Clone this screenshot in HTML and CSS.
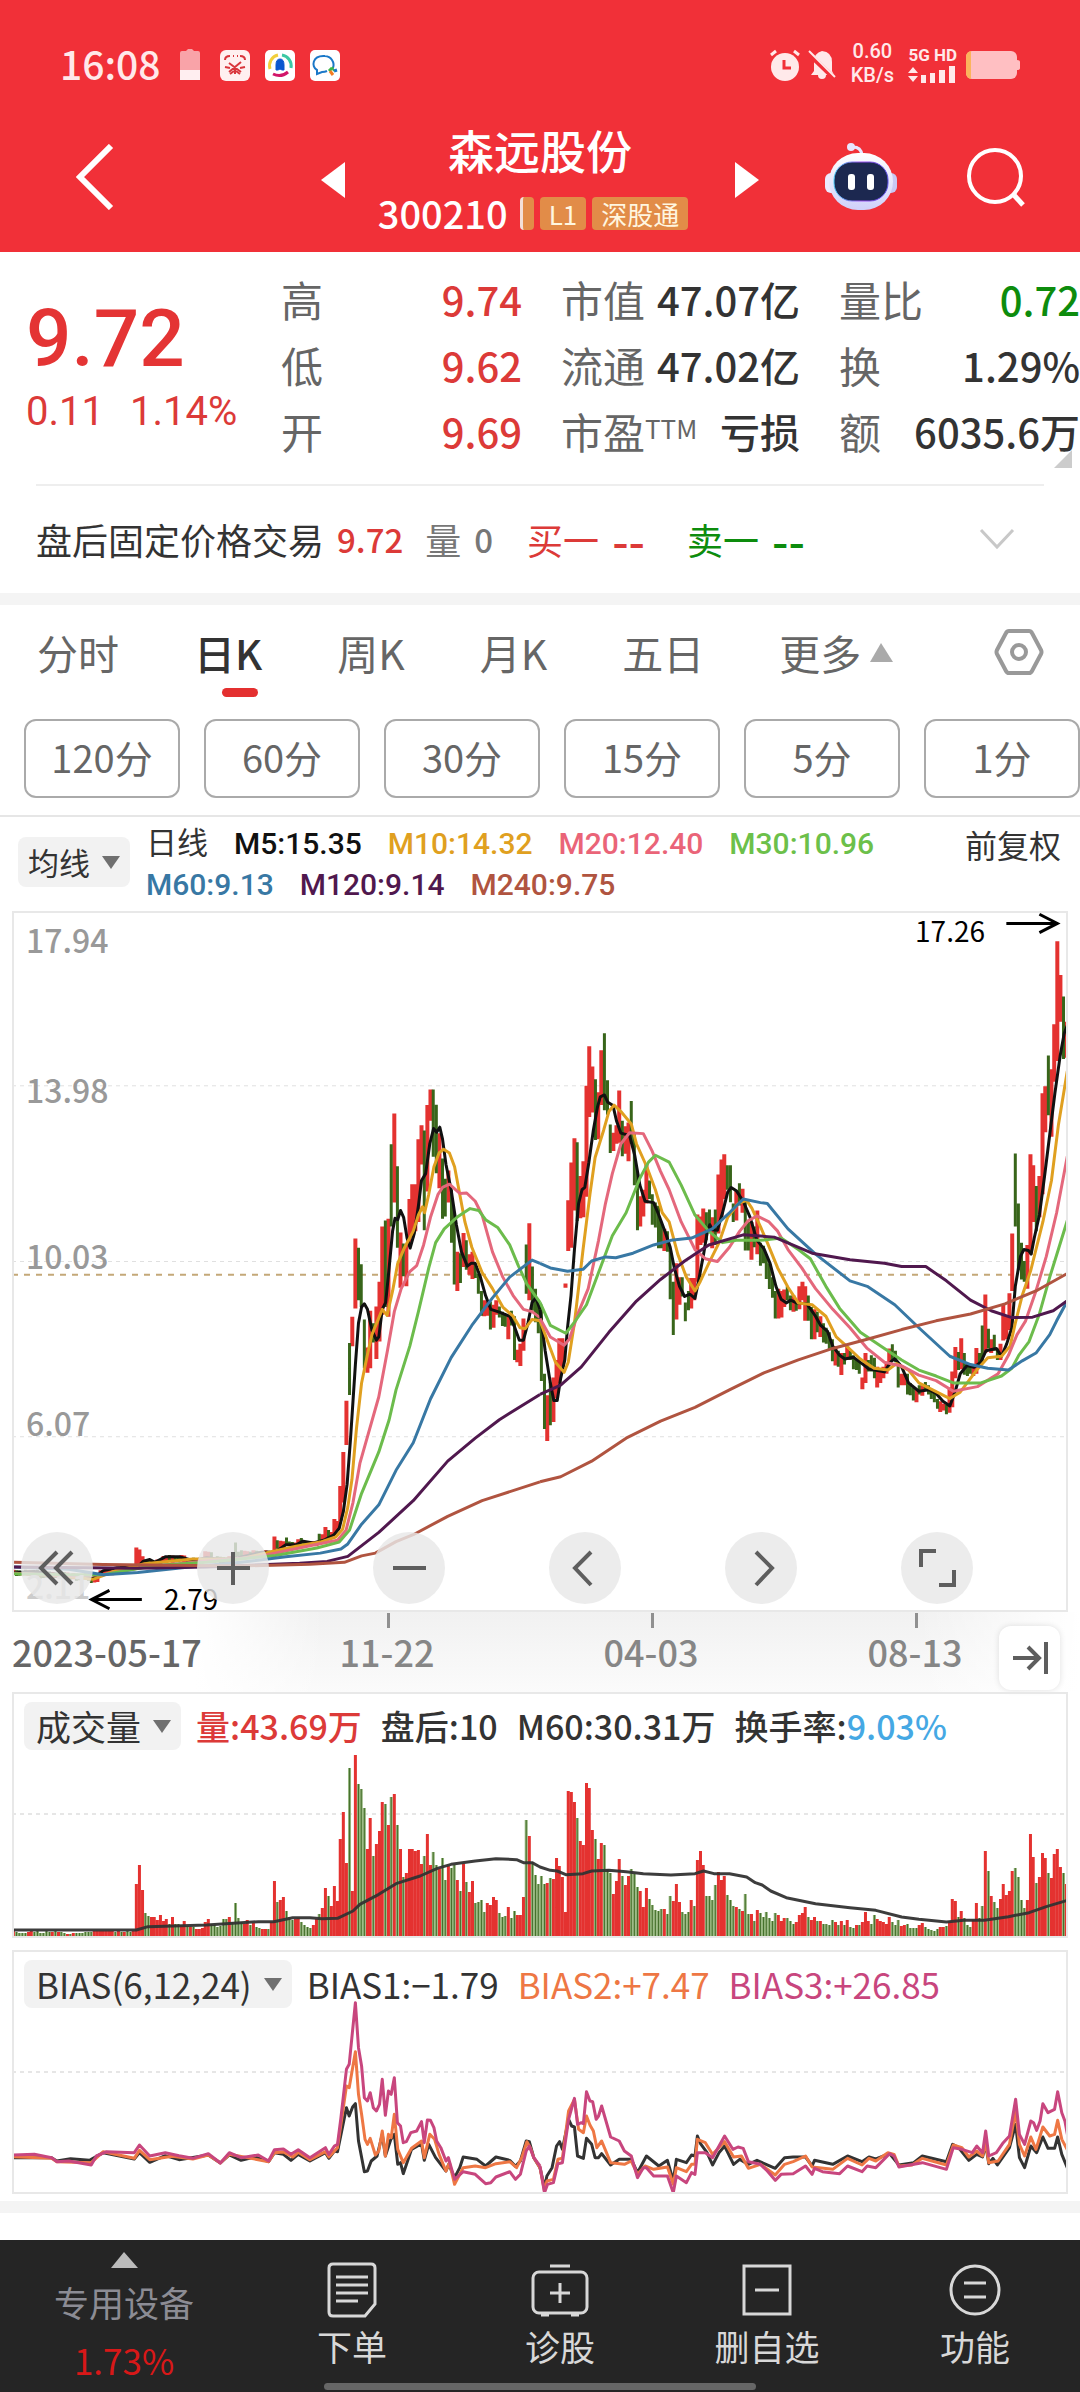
FILE: index.html
```html
<!DOCTYPE html>
<html lang="zh-CN">
<head>
<meta charset="utf-8">
<meta name="viewport" content="width=device-width">
<title>森远股份 300210</title>
<link rel="stylesheet" href="styles.css">
</head>
<body>
<header class="top">
  <div class="status">
    <span class="clock">16:08</span>
    <svg width="20" height="32" viewBox="0 0 20 32"><path d="M0 4q0-2 2-2h4l2-2h4l2 2h4q2 0 2 2v26H0z" fill="#f9a3a8"/><path d="M0 21h20v10H0z" fill="#ffeef0"/></svg>
    <svg class="app-a" width="30" height="31" viewBox="0 0 30 31"><rect width="30" height="31" rx="6" fill="#fff0f0"/><path d="M5 10q0-4 5-4M25 10q0-4-5-4M13 6h1M17 6h1M5 17l5 1M25 17l-5 1M9 13l12 9M21 12L9 22M15 18v6M10 24l4-3M20 24l-4-3" stroke="#d9363c" stroke-width="2" fill="none"/></svg>
    <svg width="30" height="31" viewBox="0 0 30 31"><rect width="30" height="31" rx="5" fill="#fff"/><path d="M5 19A11 11 0 0 1 13 5" stroke="#f2cf3c" stroke-width="3" fill="none"/><path d="M17 5a11 11 0 0 1 9 13" stroke="#3cc8a4" stroke-width="3" fill="none"/><path d="M8 24q8 4 15-2" stroke="#d2156a" stroke-width="3" fill="none"/><path d="M11 20v-5q0-6 4-6t4 6v5h-2l-2-1-2 1z" fill="#0b57d0" stroke="#0b57d0"/></svg>
    <svg width="30" height="31" viewBox="0 0 30 31"><rect width="30" height="31" rx="5" fill="#fff"/><path d="M23 18a9 9 0 0 0-8-12C2 5 1 17 7 20v4l5-2q3 0 5-1" stroke="#1a78c8" stroke-width="2" fill="none"/><path d="M19 21l3-3" stroke="#3bb54a" stroke-width="3"/><path d="M22 17l2 4" stroke="#3bb54a" stroke-width="2"/><path d="M20 21l3 4" stroke="#f57c20" stroke-width="3"/><path d="M24 21l3-1" stroke="#1a78c8" stroke-width="3"/></svg>
    <span class="grow"></span>
    <svg class="alarm" width="30" height="32" viewBox="0 0 30 32"><circle cx="15" cy="18" r="14" fill="#ffe9ea"/><path d="M14 11v8h7" stroke="#f13038" stroke-width="3" fill="none"/><path d="M1 6l5-4M29 6l-5-4" stroke="#ffe9ea" stroke-width="3"/></svg>
    <svg width="28" height="32" viewBox="0 0 28 32"><path d="M3 26l3-4v-9Q6 4 14 2q10 1 10 11v9l2 4H18q0 4-4 4t-4-4z" fill="#ffe9ea"/><path d="M0 4l27 26" stroke="#f13038" stroke-width="5"/><path d="M1 2l26 26" stroke="#ffe9ea" stroke-width="2"/></svg>
    <span class="speed"><b>0.60</b><b>KB/s</b></span>
    <span class="net"><b>5G HD</b><svg width="48" height="17" viewBox="0 0 48 17" fill="#ffe9ea"><path d="M0 7l5-6 5 6zM0 10h10l-5 6zM13 9h5v8h-5zM22 7h5v10h-5zM31 4h6v13h-6zM41 0h6v17h-6z"/></svg></span>
    <svg width="54" height="28" viewBox="0 0 54 28"><rect width="51" height="28" rx="6" fill="#ffbfc2"/><path d="M5 0Q0 1 0 6v16q0 5 5 6z" fill="#fbb45c"/><path d="M51 9q3 0 3 2v6q0 2-3 2z" fill="#ffbfc2"/></svg>
  </div>
  <div class="titlebar">
    <button class="plain back" aria-label="返回"><svg width="38" height="66" viewBox="0 0 38 66"><path d="M35 2L4 33l31 31" fill="none" stroke="#fff" stroke-width="6"/></svg></button>
    <div class="stock">
      <button class="plain" aria-label="上一只"><svg width="24" height="38" viewBox="0 0 24 38"><path d="M24 1v36L0 19z" fill="#fff"/></svg></button>
      <div class="name">
        <h1>森远股份</h1>
        <p class="code">300210 <i class="tag cut"></i><i class="tag">L1</i><i class="tag wide">深股通</i></p>
      </div>
      <button class="plain" aria-label="下一只"><svg width="24" height="38" viewBox="0 0 24 38"><path d="M0 1v36l24-18z" fill="#fff"/></svg></button>
    </div>
    <div class="tools">
      <button class="plain" aria-label="智能助手"><svg width="72" height="68" viewBox="0 0 72 68"><defs><linearGradient id="shell" x2="0" y2="1"><stop stop-color="#fff"/><stop offset="1" stop-color="#cfd0fa"/></linearGradient><linearGradient id="rim"><stop stop-color="#4fd0ff"/><stop offset=".5" stop-color="#a050f0"/><stop offset="1" stop-color="#5a50e8"/></linearGradient></defs><path d="M28 4q8 0 9 8" fill="none" stroke="#e8e6ff" stroke-width="3"/><circle cx="26" cy="4" r="4" fill="#e8e6ff"/><rect y="30" width="14" height="20" rx="6" fill="#eceaff"/><rect x="58" y="30" width="14" height="20" rx="6" fill="#c9c8f4"/><rect x="4" y="10" width="64" height="57" rx="29" fill="url(#shell)"/><rect x="9" y="19" width="54" height="39" rx="18" fill="#1c2850" stroke="url(#rim)" stroke-width="1"/><rect x="23" y="31" width="7" height="16" rx="3" fill="#fff"/><rect x="42" y="31" width="7" height="16" rx="3" fill="#fff"/></svg></button>
      <button class="plain" aria-label="搜索"><svg width="60" height="62" viewBox="0 0 60 62"><circle cx="29" cy="30" r="26" fill="none" stroke="#fff" stroke-width="4"/><path d="M47 48l10 11" stroke="#fff" stroke-width="5"/></svg></button>
    </div>
  </div>
</header>

<main>
<section class="quote">
  <div class="last">
    <strong>9.72</strong>
    <span><em>0.11</em><em>1.14%</em></span>
  </div>
  <dl class="up">
    <div><dt>高</dt><dd>9.74</dd></div>
    <div><dt>低</dt><dd>9.62</dd></div>
    <div><dt>开</dt><dd>9.69</dd></div>
  </dl>
  <dl>
    <div><dt>市值</dt><dd>47.07亿</dd></div>
    <div><dt>流通</dt><dd>47.02亿</dd></div>
    <div><dt>市盈<sup>TTM</sup></dt><dd>亏损</dd></div>
  </dl>
  <dl>
    <div><dt>量比</dt><dd class="green">0.72</dd></div>
    <div><dt>换</dt><dd>1.29%</dd></div>
    <div><dt>额</dt><dd>6035.6万</dd></div>
  </dl>
  <svg class="corner" width="18" height="18" viewBox="0 0 18 18"><path d="M18 0v18H0z" fill="#ccc"/></svg>
</section>

<section class="after">
  <span>盘后固定价格交易</span><b class="red">9.72</b><span class="muted vol">量</span><b class="muted">0</b>
  <span class="red bid">买一</span><b class="red none">--</b><span class="green ask">卖一</span><b class="green none">--</b>
  <button class="plain expand" aria-label="展开"><svg width="36" height="22" viewBox="0 0 36 22"><path d="M2 2l16 17L34 2" fill="none" stroke="#c8c8c8" stroke-width="3"/></svg></button>
</section>

<nav class="tabs">
  <button class="plain">分时</button>
  <button class="plain on">日K</button>
  <button class="plain">周K</button>
  <button class="plain">月K</button>
  <button class="plain">五日</button>
  <button class="plain more">更多<svg width="23" height="19" viewBox="0 0 23 19"><path d="M11 0l12 19H0z" fill="#aaa"/></svg></button>
  <button class="plain gear" aria-label="设置"><svg width="50" height="46" viewBox="0 0 50 46" fill="none" stroke="#999" stroke-width="4"><path d="M15 2h20q2 0 3 2l9 17q1 2 0 4l-9 17q-1 2-3 2H15q-2 0-3-2L3 25q-1-2 0-4l9-17q1-2 3-2z"/><circle cx="25" cy="23" r="7"/></svg></button>
</nav>
<div class="periods">
  <button>120分</button><button>60分</button><button>30分</button><button>15分</button><button>5分</button><button>1分</button>
</div>

<section class="legend">
  <button class="pick">均线<i class="down"></i></button>
  <ul>
    <li>日线</li><li class="c5">M5:15.35</li><li class="c10">M10:14.32</li><li class="c20">M20:12.40</li><li class="c30">M30:10.96</li>
    <li class="c60">M60:9.13</li><li class="c120">M120:9.14</li><li class="c240">M240:9.75</li>
  </ul>
  <span class="adjust">前复权</span>
</section>

<section class="frame kline">
  <svg viewBox="35 24 3066 1524" preserveAspectRatio="none">
    <g class="grid"><path d="M35 404H3101M35 786H3101M35 1167H3101"/></g>
    <path class="now" d="M35 815H3101"/>
    <path id="k-up" class="up-bar"/><path id="k-down" class="down-bar"/>
    <g class="ma">
      <polyline class="s5" points="41,1462 100,1460 180,1468 230,1470 270,1475 300,1458 340,1452 400,1450 415,1438 435,1434 450,1440 480,1428 520,1428 560,1436 600,1430 640,1434 680,1432 720,1425 760,1418 790,1418 810,1412 830,1402 860,1402 880,1394 910,1398 940,1392 970,1380 985,1366 997,1330 1008,1270 1018,1170 1032,1010 1041,920 1050,885 1058,878 1067,890 1080,935 1093,957 1100,950 1110,890 1120,875 1130,800 1140,720 1147,692 1155,695 1163,675 1172,690 1182,735 1191,757 1203,725 1215,665 1224,610 1236,595 1248,530 1259,497 1268,505 1277,494 1285,520 1295,575 1310,630 1325,705 1340,765 1357,796 1368,790 1380,790 1395,820 1410,860 1425,890 1450,896 1480,905 1495,930 1508,957 1520,957 1533,920 1545,875 1556,865 1568,890"/>
      <polyline class="s10" points="41,1464 180,1470 270,1477 330,1460 420,1443 560,1433 700,1432 800,1415 860,1405 930,1396 975,1385 995,1368 1010,1320 1022,1260 1035,1150 1050,1050 1068,985 1080,945 1110,890 1124,903 1140,850 1155,790 1172,760 1200,720 1215,685 1227,667 1233,680 1245,640 1260,580 1275,550 1288,542 1305,550 1320,580 1335,640 1350,700 1370,755 1400,810 1430,845 1460,885 1490,905 1510,930 1525,932 1545,912 1568,915"/>
      <polyline class="s20" points="41,1464 200,1469 300,1467 420,1450 600,1437 750,1428 900,1404 980,1392 1005,1370 1025,1310 1045,1225 1100,1080 1125,980 1145,895 1165,845 1190,808 1210,795 1230,750 1250,690 1272,640 1285,625 1305,618 1335,638 1355,637 1380,655 1400,685 1430,765 1460,820 1490,860 1520,890 1545,895 1568,908"/>
      <polyline class="s30" points="41,1465 200,1467 300,1467 450,1447 600,1440 800,1425 920,1409 985,1396 1015,1370 1050,1290 1100,1200 1130,1130 1150,1065 1190,970 1215,895 1245,800 1265,745 1290,715 1330,688 1365,671 1390,675 1410,695 1445,712 1480,750 1505,795 1530,835 1568,875"/>
      <polyline class="s60" points="41,1450 200,1455 300,1467 400,1462 550,1450 700,1440 830,1428 930,1420 990,1411 1010,1400 1050,1357 1100,1315 1150,1240 1200,1180 1250,1085 1310,995 1370,925 1430,865 1480,820 1545,783 1568,790"/>
      <polyline class="s120" points="41,1450 400,1453 600,1450 870,1442 950,1438 1010,1427 1100,1375 1200,1306 1300,1220 1380,1170 1450,1130 1568,1075"/>
      <polyline class="s240" points="41,1440 300,1445 700,1448 900,1444 1000,1440 1050,1426 1090,1420 1150,1395 1200,1380 1300,1340 1400,1306 1568,1265"/>
    </g>
    <g class="ma" transform="translate(1568 0)">
      <polyline class="s5" points="0,890 15,980 30,1050 40,1088 50,1088 60,1040 72,1000 80,930 90,860 100,760 112,660 122,630 130,625 142,570 155,500 167,450 175,428 187,424 197,440 212,447 222,480 235,507 260,512 275,555 290,620 305,655 330,658 345,685 365,725 378,755 390,800 405,840 420,862 435,857 450,866 460,830 475,770 485,725 493,706 500,717 515,718 530,680 545,635 555,625 570,632 590,655 610,690 630,740 650,758 668,790 685,840 700,868 715,876 728,870 745,876 775,878 800,905 815,925 835,938 850,970 870,990 885,998 910,994 935,1008 955,1020 1000,1026 1020,1003 1030,997 1050,1015 1070,1050 1100,1068 1130,1065 1150,1073 1170,1090 1190,1100 1205,1070 1220,1030 1240,1012 1260,1016 1280,1005 1295,980 1325,975 1340,992 1355,965 1370,930 1380,840 1395,775 1405,760 1418,762 1426,770 1435,735 1450,685 1465,600 1480,510 1495,420 1510,340 1522,290 1531,273"/>
      <polyline class="s10" points="0,915 20,955 45,1005 70,1027 82,1005 100,920 125,760 145,640 160,560 185,500 200,460 215,446 235,460 265,487 280,530 310,580 335,630 355,680 375,700 400,770 425,820 450,850 465,830 490,790 520,745 545,690 575,660 600,653 615,670 640,710 660,745 690,800 720,842 750,876 790,880 830,905 860,950 890,970 930,998 970,1018 1010,1022 1035,1008 1070,1022 1100,1050 1140,1065 1190,1084 1220,1070 1270,1020 1300,995 1340,992 1365,970 1380,920 1400,860 1425,805 1460,700 1485,610 1505,490 1531,372"/>
      <polyline class="s20" points="0,910 30,950 70,968 85,955 110,900 140,845 170,740 190,660 210,595 235,530 260,506 300,508 325,545 350,590 375,630 410,700 450,760 480,780 515,786 550,755 580,720 605,697 630,687 665,700 690,720 720,760 760,800 800,845 850,890 900,930 950,975 1000,1005 1050,1013 1100,1033 1150,1045 1200,1068 1270,1058 1330,1030 1360,990 1385,945 1410,915 1440,850 1470,775 1500,680 1531,557"/>
      <polyline class="s30" points="0,875 30,925 75,942 100,918 135,880 175,800 210,730 250,680 290,605 315,570 335,555 375,570 410,620 450,685 490,720 530,745 570,740 640,740 700,735 750,760 785,780 830,840 870,888 930,940 1000,975 1050,1000 1100,1022 1150,1035 1200,1050 1280,1050 1340,1035 1370,1018 1390,990 1420,960 1450,900 1480,820 1531,697"/>
      <polyline class="s60" points="0,790 30,800 80,807 125,803 150,785 190,776 220,778 270,768 330,750 380,740 440,735 500,715 550,680 590,650 640,658 660,660 720,715 800,770 900,828 950,840 1030,880 1100,930 1190,992 1250,1010 1300,1018 1360,1022 1400,1002 1440,985 1480,945 1500,915 1531,872"/>
      <polyline class="s120" points="0,1075 60,1055 120,1015 200,940 280,872 350,825 420,785 490,750 590,728 680,733 790,768 900,782 1000,790 1050,797 1120,797 1180,828 1250,870 1310,893 1370,908 1430,907 1490,893 1531,871"/>
      <polyline class="s240" points="0,1265 60,1254 150,1220 250,1170 350,1133 450,1103 550,1065 650,1028 750,1000 850,975 950,955 1050,934 1150,915 1250,900 1350,878 1440,850 1531,812"/>
    </g>
    <path class="arrow" d="M2922 51H3068M3018 31L3070 51L3018 71M412 1521H266M318 1501L266 1521L318 1541"/>
  </svg>
  <span class="y y1">17.94</span><span class="y y2">13.98</span><span class="y y3">10.03</span><span class="y y4">6.07</span><span class="y y5">2.11</span>
  <span class="ext high">17.26</span><span class="ext low">2.79</span>
  <div class="controls">
    <button aria-label="最左"><svg viewBox="0 0 72 72"><path d="M36 20L20 36l16 16M51 20L35 36l16 16"/></svg></button>
    <button aria-label="放大"><svg viewBox="0 0 72 72"><path d="M20 36h33M36 20v33"/></svg></button>
    <button aria-label="缩小"><svg viewBox="0 0 72 72"><path d="M20 36h33"/></svg></button>
    <button aria-label="向左"><svg viewBox="0 0 72 72"><path d="M42 20L26 36l16 17"/></svg></button>
    <button aria-label="向右"><svg viewBox="0 0 72 72"><path d="M31 20l16 16-16 17"/></svg></button>
    <button aria-label="全屏"><svg viewBox="0 0 72 72"><path d="M20 35V19h15M38 53h15V38"/></svg></button>
  </div>
</section>
<div class="dates">
  <time>2023-05-17</time><time>11-22</time><time>04-03</time><time>08-13</time>
  <button class="jump" aria-label="最新"><svg width="36" height="36" viewBox="0 0 36 36"><path d="M1 18h26M16 7l11 11-11 11M34 2v32"/></svg></button>
</div>

<section class="frame volume">
  <svg viewBox="35 -177 3066 738" preserveAspectRatio="none">
    <path class="mid" d="M35 189H3101"/>
    <path id="v-down" class="vol-down"/><path id="v-down-edge" class="vol-edge"/><path id="v-up" class="up-bar"/>
    <polyline class="vma" points="39,537 396,537 430,527 600,522 750,512 795,512 850,500 900,500 935,503 980,502 1025,480 1045,460 1100,430 1150,398 1220,375 1270,352 1310,340 1380,330 1440,323 1500,326 1520,335 1545,335 1568,348 1598,358 1618,360 1643,371 1693,368 1718,360 1768,358 1818,362 1868,368 1948,372 2018,368 2043,360 2073,368 2118,368 2168,378 2193,395 2213,402 2238,420 2283,440 2368,458 2468,470 2543,478 2618,498 2668,505 2748,513 2798,508 2858,508 2928,497 2988,485 3038,467 3099,448"/>
  </svg>
  <div class="head">
    <button class="pick">成交量<i class="down"></i></button>
    <span class="red">量:43.69万</span><span>盘后:10</span><span>M60:30.31万</span><span>换手率:<b class="blue">9.03%</b></span>
  </div>
</section>

<section class="frame bias">
  <svg viewBox="35 597 3066 732" preserveAspectRatio="none">
    <path class="mid" d="M35 963H3101"/>
    <g class="bl">
      <polyline class="b1" points="39,1220 150,1220 165,1230 205,1223 260,1228 300,1205 390,1224 405,1205 435,1234 480,1214 520,1226 605,1212 640,1236 666,1212 700,1228 740,1218 780,1232 797,1205 823,1210 845,1228 866,1210 900,1230 945,1205 955,1222 971,1200 980,1202 1006,1070 1014,1095 1024,1068 1032,1058 1041,1170 1058,1262 1067,1260 1078,1230 1095,1215 1110,1150 1119,1215 1135,1165 1145,1150 1155,1240 1163,1235 1171,1268 1195,1195 1224,1178 1232,1228 1245,1180 1265,1220 1295,1260 1303,1240 1320,1280 1335,1250 1345,1218 1385,1225 1410,1245 1440,1218 1480,1228 1497,1246 1511,1230 1528,1170 1537,1172 1550,1220 1568,1250"/>
      <polyline class="b1" transform="translate(1568 0)" points="0,1250 13,1310 20,1275 35,1250 48,1185 57,1172 65,1195 83,1105 92,1125 100,1128 109,1215 126,1222 135,1162 150,1180 160,1220 170,1220 179,1208 205,1242 230,1225 265,1225 283,1265 309,1215 345,1245 370,1228 387,1290 396,1225 425,1235 440,1212 450,1215 457,1155 466,1178 485,1205 501,1242 520,1205 536,1185 562,1240 580,1225 605,1240 630,1228 683,1252 710,1220 735,1218 771,1218 790,1245 797,1228 850,1240 893,1215 935,1232 955,1218 975,1224 1015,1208 1042,1242 1085,1235 1110,1215 1180,1232 1198,1180 1215,1190 1245,1228 1268,1210 1285,1218 1294,1180 1303,1238 1315,1222 1328,1242 1363,1190 1381,1120 1392,1220 1407,1250 1425,1185 1442,1205 1460,1158 1475,1192 1494,1192 1503,1158 1515,1210 1533,1255"/>
      <polyline class="b2" points="39,1217 150,1222 165,1232 265,1235 300,1202 390,1222 405,1198 435,1226 500,1216 560,1224 605,1212 640,1236 666,1210 780,1232 797,1205 823,1203 850,1218 866,1204 900,1226 945,1202 955,1218 980,1190 990,1120 1006,1005 1014,1010 1032,902 1041,1030 1050,1090 1060,1165 1067,1180 1075,1162 1090,1212 1100,1200 1110,1140 1119,1215 1128,1150 1136,1160 1145,1090 1155,1195 1171,1235 1195,1192 1224,1170 1232,1220 1248,1150 1262,1165 1275,1210 1295,1260 1305,1235 1320,1300 1345,1250 1380,1245 1410,1250 1440,1238 1480,1232 1500,1250 1515,1220 1530,1172 1540,1190 1550,1220 1568,1250"/>
      <polyline class="b2" transform="translate(1568 0)" points="0,1250 13,1320 20,1290 39,1285 52,1225 65,1222 83,1080 100,1045 112,1135 126,1145 135,1095 145,1122 155,1140 165,1190 179,1170 205,1235 245,1240 265,1230 283,1270 305,1245 330,1255 370,1248 387,1300 396,1250 425,1262 440,1240 450,1240 457,1165 480,1175 501,1210 536,1172 562,1218 585,1215 605,1252 640,1240 683,1272 710,1240 735,1232 771,1215 790,1248 850,1255 893,1222 935,1242 955,1222 975,1230 1010,1205 1028,1210 1042,1245 1080,1242 1110,1222 1180,1242 1200,1182 1225,1190 1245,1218 1268,1200 1285,1215 1294,1175 1303,1235 1330,1230 1363,1180 1381,1080 1392,1180 1407,1215 1425,1158 1440,1195 1460,1128 1480,1155 1494,1150 1503,1108 1515,1165 1533,1200"/>
      <polyline class="b3" points="39,1212 100,1210 150,1220 165,1232 200,1230 265,1242 280,1215 310,1202 390,1205 405,1182 435,1215 480,1205 520,1214 560,1222 605,1208 640,1236 666,1205 700,1220 750,1212 780,1230 797,1196 823,1194 845,1210 866,1196 900,1220 945,1190 955,1210 971,1185 980,1180 990,1100 1006,955 1014,940 1032,755 1041,890 1050,945 1058,1040 1067,1050 1075,1025 1084,1070 1093,1080 1102,1060 1110,985 1119,1093 1128,1020 1136,1030 1145,980 1154,1115 1163,1125 1171,1175 1180,1172 1193,1145 1210,1140 1224,1112 1232,1175 1241,1107 1250,1108 1260,1130 1268,1170 1280,1190 1295,1230 1302,1220 1320,1285 1345,1262 1380,1270 1410,1298 1425,1295 1440,1278 1480,1262 1497,1285 1511,1270 1528,1200 1537,1185 1550,1220 1568,1245"/>
      <polyline class="b3" transform="translate(1568 0)" points="0,1245 13,1325 22,1300 39,1295 52,1238 65,1235 83,1105 100,1042 109,1120 120,1115 126,1118 135,1022 145,1050 153,1052 163,1105 170,1095 179,1065 205,1158 230,1170 245,1200 265,1215 283,1280 300,1250 309,1250 330,1275 370,1275 387,1325 396,1275 425,1295 440,1265 450,1270 457,1205 480,1205 501,1220 536,1155 560,1195 575,1188 590,1192 605,1232 640,1240 660,1260 683,1288 700,1270 735,1268 771,1245 790,1270 797,1252 820,1262 870,1268 893,1245 935,1262 950,1245 975,1250 1015,1208 1028,1215 1042,1248 1110,1235 1180,1255 1200,1190 1225,1195 1255,1205 1268,1185 1285,1205 1294,1140 1303,1215 1325,1205 1345,1175 1363,1155 1381,1045 1392,1150 1407,1180 1425,1110 1433,1115 1442,1138 1452,1110 1460,1058 1475,1085 1494,1075 1503,1022 1515,1085 1524,1110 1533,1160"/>
    </g>
  </svg>
  <div class="head">
    <button class="pick">BIAS(6,12,24)<i class="down"></i></button>
    <span>BIAS1:−1.79</span><span class="orange">BIAS2:+7.47</span><span class="pink">BIAS3:+26.85</span>
  </div>
</section>
<div class="strip"></div>
</main>

<footer class="dock">
  <button class="plain sector"><svg width="27" height="16" viewBox="0 0 27 16"><path d="M13 0l14 16H0z" fill="#bbb"/></svg><span>专用设备</span><b>1.73%</b></button>
  <button class="plain"><svg width="50" height="56" viewBox="0 0 50 56"><path d="M6 2h38q4 0 4 4v36L38 54H6q-4 0-4-4V6q0-4 4-4z"/><path d="M9 15h32M9 23h32M9 31h32M9 39h22"/></svg>下单</button>
  <button class="plain"><svg width="58" height="56" viewBox="0 0 58 56"><rect x="2" y="10" width="54" height="41" rx="6"/><path d="M19 4h20M29 21v20M19 31h20M10 53h8M40 53h8"/></svg>诊股</button>
  <button class="plain"><svg width="50" height="56" viewBox="0 0 50 56"><path d="M2 4h46v48H2zM13 28h24"/></svg>删自选</button>
  <button class="plain"><svg width="52" height="56" viewBox="0 0 52 56"><circle cx="26" cy="28" r="24"/><path d="M15 21h22M15 35h22"/></svg>功能</button>
  <i class="home"></i>
</footer>
<script src="chart.js"></script>
</body>
</html>
```
FILE: styles.css
```css
* { box-sizing: border-box; }
body {
  margin: 0;
  background: #fff;
  color: #333;
  font-family: "Noto Sans CJK SC", "Noto Sans", sans-serif;
  font-weight: 400;
}
button { font: inherit; color: inherit; cursor: pointer; }
.plain { padding: 0; border: 0; background: none; }
svg { display: block; flex: none; }
h1, p, dl, dd, ul { margin: 0; padding: 0; }
i, em { font-style: normal; }
b { font-weight: 500; }
.red { color: #dc3a38; }
.green { color: #0d8c0d; }
.blue { color: #45a8e4; }
.orange { color: #ee7744; }
.pink { color: #c8467e; }
.muted { color: #777; }

.top { height: 252px; background: #f13038; color: #fff; }
.status { display: flex; align-items: center; height: 84px; padding: 42px 60px 0; color: #ffe9ea; }
.status > * { margin-top: 4px; }
.status .clock { margin: 0 19px 0 0; font-size: 39px; line-height: 40px; font-weight: 500; }
.status svg + svg { margin-left: 15px; }
.status .app-a { margin-left: 20px; }
.grow { flex: 1; }
.status .alarm + svg { margin-left: 8px; }
.speed { display: flex; flex-direction: column; align-items: center; width: 50px; margin: 0 11px; font-family: Roboto, sans-serif; font-size: 20px; line-height: 24px; }
.net { display: flex; flex-direction: column; gap: 2px; margin-right: 9px; font-family: Roboto, sans-serif; font-size: 17px; line-height: 17px; }
.net b { font-weight: 700; }
.titlebar { display: grid; grid-template-columns: 1fr auto 1fr; align-items: center; height: 168px; padding: 0 54px; }
.back { justify-self: start; margin: 18px 0 0 22px; }
.stock { display: flex; align-items: center; }
.stock button { margin-top: 24px; }
.tools { display: flex; align-items: center; justify-content: flex-end; gap: 69px; margin-top: 18px; }
.name { width: 390px; text-align: center; margin-top: 26px; }
.name h1 { font-size: 46px; line-height: 64px; font-weight: 500; }
.code { display: flex; align-items: center; justify-content: center; gap: 6px; margin-right: 14px; font-size: 38px; line-height: 64px; font-weight: 500; }
.tag { padding: 0 9px; border-radius: 4px; background: #e28c48; color: #fff6e0; font-size: 26px; line-height: 33px; font-weight: 400; }
.tag.cut { width: 14px; height: 33px; padding: 0; margin-left: 6px; border-left: 3px solid #f4e0d8; }

.quote { position: relative; display: grid; grid-template-columns: 216fr 241fr 239fr 241fr; gap: 39px; margin-top: 14px; padding-left: 26px; font-size: 40px; line-height: 66px; }
.quote dl > div { display: flex; justify-content: space-between; height: 66px; white-space: nowrap; }
.quote dt { color: #666; font-size: 42px; }
.quote dd { font-weight: 500; }
.quote sup { font-size: 26px; line-height: 26px; vertical-align: 10px; }
.quote .up dd { color: #dc3a38; }
.last { color: #e43434; font-family: Roboto, sans-serif; white-space: nowrap; }
.last strong { display: block; padding-top: 24px; font-size: 80px; line-height: 98px; font-weight: 500; }
.last em { margin-right: 26px; }
.last span { display: block; font-size: 40px; line-height: 48px; color: #dc3a38; }
.last em:last-child { margin: 0; }
.corner { position: absolute; right: 8px; bottom: -4px; }

.after { display: flex; align-items: center; height: 109px; margin: 20px 36px 0; padding-bottom: 2px; border-top: 2px solid #eee; font-size: 36px; line-height: 50px; white-space: nowrap; }
.after b { margin-left: 13px; font-size: 33px; }
.after .vol { margin-left: 22px; }
.after .bid { margin-left: 34px; }
.after .ask { margin-left: 42px; }
.after .none { font-size: 46px; }
.expand { margin-left: auto; margin-right: 29px; }

.tabs { display: flex; align-items: center; gap: 75px; height: 114px; padding: 0 36px 8px 37px; border-top: 12px solid #f4f4f4; color: #666; font-size: 41px; line-height: 60px; white-space: nowrap; }
.tabs .on { position: relative; color: #333; font-weight: 500; }
.tabs .on::after { content: ""; position: absolute; left: 28px; bottom: -15px; width: 36px; height: 9px; border-radius: 5px; background: #e43030; }
.more { display: flex; align-items: center; gap: 9px; }
.gear { margin-left: auto; }
.periods { display: grid; grid-template-columns: repeat(6, 1fr); gap: 24px; padding: 12px 0 17px 24px; border-bottom: 2px solid #e6e6e6; }
.periods button { height: 79px; padding: 0 0 4px; border: 2px solid #aaa; border-radius: 12px; background: #fff; color: #666; font-size: 38px; }

.pick { display: flex; align-items: center; gap: 12px; height: 50px; padding: 0 10px 0 12px; border: 0; border-radius: 8px; background: #f2f2f2; color: #333; white-space: nowrap; }
.down { border: 9px solid transparent; border-top: 13px solid #707070; border-bottom: 0; }
.legend { display: flex; align-items: flex-start; height: 94px; padding: 7px 19px 0 18px; font-size: 31px; line-height: 40px; white-space: nowrap; }
.legend .pick { margin-top: 13px; padding-left: 10px; }
.legend ul { display: flex; flex-wrap: wrap; flex: 1; gap: 1px 26px; margin-left: 16px; list-style: none; font-family: Roboto, "Noto Sans CJK SC", sans-serif; font-weight: 500; font-size: 30px; }
.legend li:first-child { font-size: 31px; font-weight: 400; }
.adjust { font-size: 32px; }
.c5 { color: #111; } .c10 { color: #e0a020; } .c20 { color: #ea6478; } .c30 { color: #6cc04a; }
.c60 { color: #3878a4; } .c120 { color: #50184e; } .c240 { color: #b05440; }

.frame { position: relative; margin: 0 12px; }
.frame > svg { width: 100%; height: 100%; }
.frame::before { content: ""; position: absolute; inset: 0; border: 2px solid #e8e8e8; }
.frame svg * { vector-effect: non-scaling-stroke; }
.kline { height: 701px; }
.grid, .mid { fill: none; stroke: #e0e0e0; stroke-width: 1; stroke-dasharray: 4 4; }
.mid { stroke: #e6e6e6; stroke-width: 2; }
.now { stroke: #c4a878; stroke-width: 2; stroke-dasharray: 6 6; }
.up-bar { stroke: #e43230; stroke-width: 4; fill: none; }
.down-bar { stroke: #38651a; stroke-width: 3; fill: none; }
.vol-down { stroke: #94b47c; stroke-width: 3; fill: none; }
.vol-edge { stroke: #45702c; stroke-width: 1; fill: none; }
.volume .up-bar { stroke-width: 3; }
.ma, .bl, .vma { fill: none; stroke-width: 3; stroke-linejoin: round; }
.vma { stroke: #333; stroke-opacity: .95; }
.s5 { stroke: #111; } .s10 { stroke: #e0a020; } .s20 { stroke: #e4687c; } .s30 { stroke: #6cbc4c; }
.s60 { stroke: #3878a4; } .s120 { stroke: #50184e; } .s240 { stroke: #b05440; }
.b1 { stroke: #333; } .b2 { stroke: #ee7744; } .b3 { stroke: #c8467e; }
.arrow { fill: none; stroke: #000; stroke-width: 3; }
.y { position: absolute; left: 14px; color: #999; font-size: 32px; line-height: 40px; font-weight: 500; }
.y1 { top: 8px; } .y2 { top: 158px; } .y3 { top: 324px; } .y4 { top: 491px; } .y5 { bottom: 7px; color: #ccc; }
.ext { position: absolute; color: #000; font-size: 28px; line-height: 32px; }
.high { top: 3px; right: 83px; }
.low { bottom: -2px; left: 152px; }
.controls { position: absolute; left: 9px; right: 95px; bottom: 8px; display: flex; justify-content: space-between; }
.controls button { width: 72px; height: 72px; padding: 0; border: 0; border-radius: 50%; background: rgba(232, 232, 232, .82); }
.controls path { fill: none; stroke: #5e5e5e; stroke-width: 4; }

.dates { position: relative; display: grid; grid-template-columns: 243fr 264fr 264fr 264fr 33fr; height: 80px; padding-left: 12px; background: linear-gradient(90deg, #fff 18%, transparent 30%, transparent 85%, #fff), linear-gradient(#f1f1f1, #fbfbfb); color: #868686; font-size: 36px; line-height: 44px; font-weight: 500; text-align: center; }
.dates time { position: relative; padding-top: 17px; white-space: nowrap; }
.dates time:first-child { text-align: left; color: #666; }
.dates time + time::before { content: ""; position: absolute; top: 1px; left: 50%; width: 3px; height: 15px; background: #909090; }
.jump { position: absolute; right: 20px; top: 14px; display: grid; place-items: center; width: 61px; height: 64px; padding: 0; border: 0; border-radius: 12px; background: #fff; box-shadow: 0 0 6px rgba(0, 0, 0, .12); }
.jump path { fill: none; stroke: #5e5e5e; stroke-width: 4; }

.volume { height: 246px; }
.bias { height: 244px; margin-top: 12px; }
.head { position: absolute; left: 12px; top: 10px; display: flex; align-items: center; gap: 19px; font-size: 34px; line-height: 48px; font-weight: 500; white-space: nowrap; }
.head .pick { height: 48px; margin-right: -4px; font-weight: 400; font-size: 35px; }
.bias .head { font-size: 35px; font-weight: 400; }
.bias .pick { font-size: 35px; }
.strip { height: 12px; margin: 7px 0 27px; background: #f4f4f4; }

.dock { position: relative; display: grid; grid-template-columns: 248fr 208fr 208fr 206fr 210fr; height: 153px; background: #252525; color: #d8d8d8; font-size: 35px; line-height: 40px; }
.dock button { display: flex; flex-direction: column; align-items: center; gap: 8px; padding-top: 22px; }
.dock button:not(.sector) svg { fill: none; stroke: #d8d8d8; stroke-width: 3; }
.dock .sector { gap: 18px; padding-top: 12px; color: #8c8c94; }
.sector svg { margin-bottom: -4px; }
.sector b { color: #d81818; font-weight: 400; }
.home { position: absolute; left: 30%; right: 30%; bottom: 3px; height: 7px; border-radius: 4px; background: #666; }
```
FILE: chart.js
```js
// One entry per trading day: r = rising, g = falling.
// Volume heights are in pixels above the baseline.
const volume = `r8 g5 g4 g4 g4 r5 r6 g5 g6 g4 g4 g6 g5 r5 g6 r5 g5 g4 r3 g3 r4 g4 g4 g4 g5 g5 g5 r6 r6 r6 r6 r6 r6 r6 g5 r6 g5 r5 g6 g5
r6 r53 r72 r47 g24 g21 r20 r20 r17 r22 r16 r18 g13 r20 g13 g13 r12 r16 g11 r10 g10 r8 r8 r9 r15 r18 g13 g12 g10 g11 g18 g18 r20 g15 g34 g19 g15 r13 r17 g12
r14 g10 g9 r8 r8 g8 r15 r56 g35 r37 r40 g26 g20 g17 r18 r19 g15 g12 g10 g9 r12 r18 g23 r29 r49 g41 r31 r51 r36 r98 r125 r74 g169 r46 r182 g153 g148 g129 r88 r119
g81 r93 r106 r135 g133 r112 g140 r143 g112 r88 g60 r64 r88 r88 r86 r87 r73 g81 r103 r72 g85 g72 r68 g79 g57 r71 g69 g72 r57 g46 r73 g55 r45 r56 g34 g35 g37 g25 r34 r32
r40 r37 g24 g20 g21 r30 g19 g26 r22 r22 r40 g117 r101 g75 g62 g53 g61 g53 r54 g59 r58 r79 r71 r60 r25 r146 r145 r135 g119 r96 r92 r154 r149 r107 g98 r78 r94 g92 g68 g64
r43 r56 r78 g61 r52 r61 g68 g63 g50 r46 r30 r49 g38 g32 g27 g26 g28 r28 g23 g41 r36 r53 r35 g25 g23 g25 r37 g31 r77 r86 r72 g41 g41 g37 g52 r65 r57 r61 g42 g37
g31 r30 g28 r26 g43 g23 r23 g16 r27 g24 g20 g25 g19 g16 g24 r22 r16 r19 g19 g16 g13 r15 r22 r24 r30 g20 r17 r20 g16 r16 g13 g13 g12 g17 r15 g12 r16 g12 r17 g10
g9 r12 g12 r15 r25 r16 g13 g22 r18 r16 r15 r13 r20 g15 g12 g17 r11 r12 g13 g9 g9 g9 r12 r14 g10 g8 g7 g6 g8 r10 r10 g11 r16 r38 r36 g20 r26 g19 g12 g10
r17 r34 g19 g31 r86 g66 r41 g35 g29 r38 r53 r42 r46 r66 g69 g60 g37 g29 r37 r103 r80 g54 r60 r84 r79 g64 r59 r83 r88 r70 g64 r53`.split(/\s+/);

// Day ranges before the rally move slowly: [first day, last day, top, bottom].
const quiet = [
  [0, 8, 1456, 1467], [9, 18, 1460, 1472], [19, 25, 1464, 1477], [26, 28, 1470, 1483],
  [29, 34, 1456, 1465], [35, 40, 1447, 1456], [41, 41, 1407, 1442], [42, 42, 1410, 1442],
  [43, 43, 1424, 1446], [44, 49, 1434, 1444], [50, 57, 1424, 1438], [58, 63, 1430, 1440],
  [64, 66, 1416, 1434], [67, 73, 1427, 1440], [74, 74, 1395, 1430], [75, 86, 1414, 1426],
  [87, 87, 1381, 1415], [88, 90, 1392, 1410], [91, 91, 1383, 1402], [92, 94, 1395, 1404],
  [95, 96, 1387, 1402], [97, 101, 1394, 1402], [102, 103, 1376, 1396]
];
// From day 104 on: top-bottom of every day.
const active = `r1363-1388 g1370-1388 r1374-1388 r1346-1378 r1350-1372 r1274-1350 r1200-1310 r1089-1185 g963-1076 r906-970 r736-888 g756-870
g792-885 g912-1018 r973-1028 r893-1018 g920-962 r884-998 r830-960 r710-902 g697-885 r693-906 g531-710 r464-658 g579-756 r723-843 g747-818 r750-840
r650-750 r618-735 r618-720 r520-700 r490-575 g501-718 r446-634 r412-480 g412-558 g445-594 r507-627 g562-693 g606-688 r588-658 g630-745 g680-836
r765-850 g768-833 r724-798 g740-804 r770-815 r765-824 g790-822 g812-856 g850-904 r870-905 r873-904 g873-934 r880-930 r870-902 g884-908 g895-926
g900-928 r905-955 g893-925 g905-1000 r978-1005 r965-1013 r910-980 g749-856 r703-870 g797-893 g845-918 g870-942 g880-1046 g1030-1150 r1077-1176
g1048-1142 r1038-1135 r1000-1084 r953-1050 r953-1015 r834-843 r653-763 r571-756 r518-675 g527-698 r600-692 r568-690 r404-645 r318-472 r362-462
g390-522 r418-520 r327-446 g290-457 g392-467 g488-550 r506-546 r490-530 r414-528 g480-557 r492-552 r484-568 g437-530 g508-620 g590-718 r644-710
r630-688 r574-660 g610-650 g640-706 g658-712 g665-757 g700-757 r715-763 g720-765 g760-868 g830-946 r790-912 r820-880 g820-862 g875-916 g850-892
r822-888 r822-870 r684-830 r688-750 r671-745 g679-740 g673-720 r690-757 g673-750 r597-725 r564-690 r553-650 g577-630 g577-657 g660-700 r632-697
g616-664 r628-680 g650-762 g700-762 r700-782 g710-755 r675-770 g745-795 g752-790 g770-824 g790-846 g820-865 g850-910 r845-910 r850-908 r847-885
g840-870 g860-892 r860-895 g870-893 r840-890 r830-870 r840-915 g860-915 g885-955 r890-955 g895-940 r905-950 g920-962 g930-965 g940-978 g955-1003
r970-1012 g980-1015 r985-1033 g985-1010 r970-1000 g980-1000 g990-1020 g1000-1022 g1000-1030 r1038-1064 r985-1050 g1000-1025 g990-1025 g995-1040
r1015-1060 r1020-1050 r1015-1040 r1005-1030 r975-1012 g966-1000 g980-1005 g1010-1060 r1030-1055 r1030-1055 g1030-1075 g1050-1077 g1060-1088
r1065-1092 g1055-1075 r1055-1078 g1048-1065 g1055-1075 g1065-1085 g1070-1092 g1085-1106 r1090-1113 r1095-1110 g1098-1118 r1060-1115 r1025-1103
r972-1040 g983-1022 r953-1020 g985-1032 g1010-1035 g1010-1030 r1010-1035 r974-1030 g985-1015 g925-1005 r858-985 g932-975 r955-985 g945-980
g975-1000 r965-1000 r880-958 r905-955 r855-935 r725-850 g551-710 g660-805 g745-825 g785-830 r750-845 r553-770 r577-700 g622-720 r600-690
r420-640 r405-505 g338-468 r368-515 r270-395 r90-350 r163-265 g210-346 r265-343`.split(/\s+/);

const x = day => Math.round(39 + 8.71 * day);
const set = (id, d) => document.getElementById(id).setAttribute("d", d);

let vUp = "", vDown = "", vEdge = "";
volume.forEach((v, day) => {
  const top = 558 - 3 * Number(v.slice(1));
  if (v[0] === "r") vUp += `M${x(day)} 560V${top}`;
  else {
    vDown += `M${x(day)} 558V${top}`;
    vEdge += `M${x(day)} 558V${top}`;
  }
});
set("v-up", vUp);
set("v-down", vDown);
set("v-down-edge", vEdge);

let up = "", down = "";
const add = (rising, day, top, bottom) => {
  const bar = `M${x(day)} ${top}V${bottom}`;
  if (rising) up += bar; else down += bar;
};
quiet.forEach(([from, to, top, bottom]) => {
  for (let day = from; day <= to; day++) {
    add(volume[day][0] === "r", day, top + (day * 5) % 4, bottom + (day * 3) % 4);
  }
});
active.forEach((c, n) => {
  const [top, bottom] = c.slice(1).split("-");
  add(c[0] === "r", 104 + n, top, bottom);
});
set("k-up", up);
set("k-down", down);
```
